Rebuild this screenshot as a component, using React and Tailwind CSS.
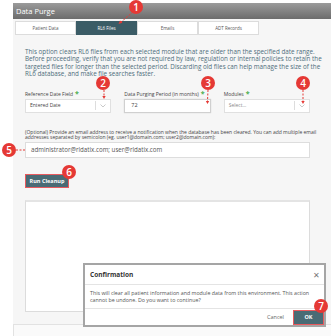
const tabs = ["Patient Data", "RL6 Files", "Emails", "ADT Records"];

const marks = [
  { n: 1, x: 136, y: 7 },
  { n: 2, x: 103, y: 83 },
  { n: 3, x: 208, y: 83 },
  { n: 4, x: 303, y: 83 },
  { n: 5, x: 9, y: 150 },
  { n: 6, x: 69, y: 172 },
  { n: 7, x: 321, y: 306 },
];

const descLines = [
  "This option clears RL6 files from each selected module that are older than the specified date range.",
  "Before proceeding, verify that you are not required by law, regulation or internal policies to retain the",
  "targeted files for longer than the selected period. Discarding old files can help manage the size of the",
  "RL6 database, and make file searches faster.",
];

const Chevron = () => (
  <div className="flex items-center h-full">
    <div className="w-px h-[9px] bg-[#ddd]" />
    <svg width="14" height="10" viewBox="0 0 14 10" className="text-[#bbb]">
      <path d="M4.5 3.5 L7 6 L9.5 3.5" fill="none" stroke="currentColor" strokeWidth="0.8" />
    </svg>
  </div>
);

const Label = ({ children }) => (
  <div className="text-[5px] leading-[6px] text-[#444] flex items-center gap-[2px]">
    {children}
    <span className="text-[#4caf50] text-[7px] leading-[6px] font-bold">*</span>
  </div>
);

export default function App() {
  return (
    <div
      className="relative w-[331px] h-[336px] bg-white overflow-hidden pl-[13px] pt-[3px]"
      style={{ fontFamily: '"Open Sans", "Liberation Sans", sans-serif' }}
    >
      <div className="flex flex-col h-full">
        {/* Header */}
        <div className="h-[16px] shrink-0 bg-gradient-to-b from-[#9b9b9b] to-[#6c6c6c] text-white text-[7.5px] leading-[16px] pl-[3px]">
          Data Purge
        </div>

        {/* Content */}
        <div className="bg-[#f6f6f6] h-[305px] shrink-0 flex flex-col">
          <div className="flex pl-[2px] pt-[2px]">
            {tabs.map((t) => (
              <div
                key={t}
                className={`w-[61px] h-[14px] flex items-center justify-center text-[4.5px] border ${
                  t === "RL6 Files"
                    ? "bg-[#3b5c66] border-[#3b5c66] text-white"
                    : "bg-white border-[#dcdcdc] text-[#555]"
                }`}
              >
                {t}
              </div>
            ))}
          </div>

          <div className="pl-[12px] pr-[21px] flex flex-col">
            <div className="mt-[12.5px] text-[6.3px] leading-[7.5px] text-[#4f6e7c] whitespace-nowrap">
              {descLines.map((l) => (
                <div key={l}>{l}</div>
              ))}
            </div>

            <div className="grid grid-cols-3 gap-x-[13px] mt-[13px]">
              <Label>Reference Date Field</Label>
              <Label>Data Purging Period (in months)</Label>
              <Label>Modules</Label>
              <div className="mt-[2px] h-[14px] bg-white border border-[#e0e0e0] flex items-center justify-between pl-[4px] text-[5px] text-[#444]">
                Entered Date
                <Chevron />
              </div>
              <div className="mt-[2px] h-[14px] bg-white border border-[#d0d0d0] shadow-[0_0_1px_#ccc] flex items-center pl-[6px] text-[5.5px] text-[#444]">
                72
              </div>
              <div className="mt-[2px] h-[14px] bg-white border border-[#e0e0e0] flex items-center justify-between pl-[4px] text-[5px] text-[#888]">
                Select...
                <Chevron />
              </div>
            </div>

            <div className="mt-[17px] text-[5px] leading-[5.6px] text-[#444] whitespace-nowrap">
              <div>
                (Optional) Provide an email address to receive a notification when the database has been cleared. You can add multiple email
              </div>
              <div>addresses separated by semicolon (eg. user1@domain.com; user2@domain.com):</div>
            </div>

            <div className="mt-[1.5px] h-[15.5px] bg-white border border-[#ddd] flex items-center pl-[5px] text-[6.2px] text-[#555]">
              administrator@rldatix.com; user@rldatix.com
            </div>

            <div className="mt-[16px] self-start">
              <div className="w-[44px] h-[14px] bg-[#4a6b75] border border-[#e85a5e] flex items-center justify-center text-white font-bold text-[5.5px]">
                Run Cleanup
              </div>
            </div>

            <div className="mt-[12.5px] h-[112px] bg-white border border-[#dcdcdc] border-t-2 border-t-[#e4e4e4]" />
          </div>
        </div>
        <div className="flex-1 bg-[#fafafa] border-t border-l border-[#e2e2e2]" />
      </div>

      {/* Confirmation dialog */}
      <div className="absolute left-[83px] top-[263px] w-[243px] h-[64px] bg-white border-2 border-[#a5a5a5] flex flex-col">
        <div className="h-[20px] flex items-center justify-between pl-[5px] pr-[4px] border-b border-[#e4e4e4]">
          <span className="text-[6.5px] font-bold text-[#333]">Confirmation</span>
          <span className="text-[8px] text-[#777] leading-none">✕</span>
        </div>
        <div className="h-[24px] flex flex-col justify-center pl-[5px] border-b border-[#e4e4e4] text-[5.3px] leading-[7px] text-[#555] whitespace-nowrap">
          <div>This will clear all patient information and module data from this environment. This action</div>
          <div>cannot be undone. Do you want to continue?</div>
        </div>
        <div className="flex-1 flex items-center justify-end gap-[9px]">
          <span className="text-[5.5px] text-[#666]">Cancel</span>
          <div className="w-[31px] h-[15px] bg-[#4a6b75] border border-[#e85a5e] flex items-center justify-center text-white font-bold text-[5.5px]">
            OK
          </div>
        </div>
      </div>

      {/* Annotation lines */}
      <svg className="absolute inset-0 pointer-events-none" width="331" height="336">
        <g stroke="#e53935" strokeWidth="1" strokeDasharray="2 1.5" fill="none">
          <path d="M133 12 L121 22" />
          <path d="M104 90 L104 96" />
          <path d="M208 90 L207.5 101" />
          <path d="M303 90 L303 101" />
          <path d="M16 150 L25 150" />
        </g>
        <g fill="#e53935">
          <path d="M118.5 24 L120 20.5 L122.5 22.7 Z" />
          <path d="M102.3 96 L105.7 96 L104 99 Z" />
          <path d="M205.8 101 L209.2 101 L207.5 104 Z" />
          <path d="M301.3 101 L304.7 101 L303 104 Z" />
        </g>
      </svg>

      {marks.map((m) => (
        <div
          key={m.n}
          className="absolute w-[14px] h-[14px] rounded-full bg-[#e53935] text-white text-[10px] leading-[10px] flex items-center justify-center font-semibold"
          style={{ left: m.x - 7, top: m.y - 7 }}
        >
          {m.n}
        </div>
      ))}
    </div>
  );
}
